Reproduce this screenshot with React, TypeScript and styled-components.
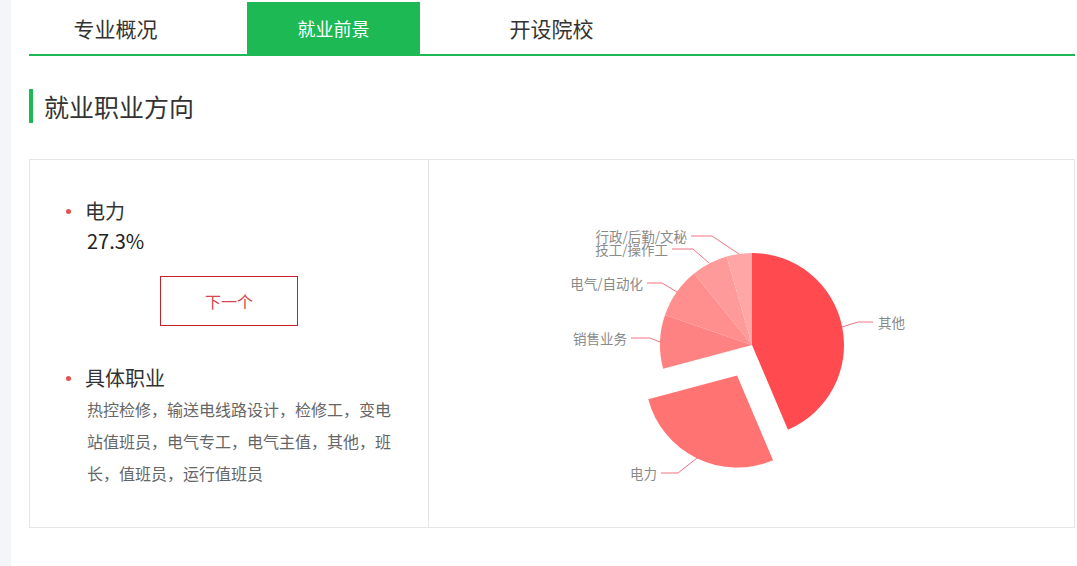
import React from "react";
import styled, { createGlobalStyle } from "styled-components";

const GREEN = "#1cb955";

const GlobalStyle = createGlobalStyle`
  html, body {
    margin: 0;
    padding: 0;
    background: #f4f5f9;
  }
  body {
    font-family: "Microsoft YaHei", "Noto Sans CJK SC", sans-serif;
    color: #333;
  }
  * { box-sizing: border-box; }
`;

const Page = styled.div`
  margin-left: 11px;
  min-height: 566px;
  background: #fff;
  padding: 2px 2px 0 18px;
`;

const TabBar = styled.div`
  display: flex;
  gap: 45px;
  border-bottom: 2px solid ${GREEN};
`;

const Tab = styled.div<{ $active?: boolean }>`
  width: 173px;
  height: 52px;
  display: flex;
  align-items: center;
  justify-content: center;
  font-size: ${(p) => (p.$active ? "18px" : "21px")};
  color: ${(p) => (p.$active ? "#fff" : "#333")};
  background: ${(p) => (p.$active ? GREEN : "transparent")};
  cursor: pointer;
`;

const SectionTitle = styled.h2`
  margin: 33px 0 0;
  height: 34px;
  line-height: 34px;
  border-left: 4px solid ${GREEN};
  padding-left: 11px;
  font-size: 25px;
  font-weight: normal;
  color: #333;
`;

const Card = styled.div`
  margin-top: 36px;
  height: 369px;
  border: 1px solid #e6e6e6;
  display: grid;
  grid-template-columns: 399px 1fr;
`;

const LeftPanel = styled.div`
  border-right: 1px solid #e6e6e6;
  padding-top: 36px;
`;

const Item = styled.div<{ $gap?: number }>`
  position: relative;
  padding-left: 55px;
  margin-top: ${(p) => p.$gap ?? 0}px;
  &::before {
    content: "";
    position: absolute;
    left: 36px;
    top: 13px;
    width: 5px;
    height: 5px;
    border-radius: 50%;
    background: #e3524f;
  }
`;

const ItemTitle = styled.div`
  font-size: 20px;
  line-height: 30px;
  color: #333;
`;

const ItemValue = styled.div`
  font-size: 20px;
  line-height: 30px;
  color: #222;
  margin-left: 2px;
`;

const NextButton = styled.button`
  display: block;
  margin: 20px auto 0;
  width: 138px;
  height: 50px;
  border: 1px solid #c8202a;
  background: #fff;
  color: #d3464e;
  font-family: inherit;
  font-size: 16px;
  cursor: pointer;
`;

const Desc = styled.div`
  margin-left: 2px;
  width: 310px;
  font-size: 16px;
  line-height: 32px;
  color: #666;
`;

const ChartPanel = styled.div`
  display: flex;
  align-items: center;
  justify-content: center;
`;

const ChartSvg = styled.svg`
  display: block;
  width: 644px;
  height: 367px;
`;

const LabelText = styled.text`
  font-size: 13.5px;
  fill: #8a8a8a;
  font-family: "Microsoft YaHei", "Noto Sans CJK SC", sans-serif;
`;

const CX = 322;
const CY = 185;
const R = 92;

type Slice = {
  name: string;
  start: number;
  end: number;
  color: string;
  offset?: number;
  line: [number, number][];
  anchor: "start" | "end";
  tx: number;
  ty: number;
};

const slices: Slice[] = [
  { name: "其他", start: 0, end: 157, color: "#ff4b4f", line: [[412, 167], [428, 162], [443, 162]], anchor: "start", tx: 448, ty: 162 },
  { name: "电力", start: 157, end: 255, color: "#ff7373", offset: 34, line: [[267, 298], [248, 313], [231, 313]], anchor: "end", tx: 227, ty: 313 },
  { name: "销售业务", start: 255, end: 289, color: "#ff8282", line: [[230, 182], [220, 178], [201, 178]], anchor: "end", tx: 197, ty: 178 },
  { name: "电气/自动化", start: 289, end: 321, color: "#ff8e8e", line: [[247, 132], [232, 123], [217, 123]], anchor: "end", tx: 213, ty: 123 },
  { name: "技工/操作工", start: 321, end: 344, color: "#ff9a9a", line: [[279, 103], [263, 89], [242, 89]], anchor: "end", tx: 238, ty: 89 },
  { name: "行政/后勤/文秘", start: 344, end: 360, color: "#ffa7a7", line: [[309, 94], [282, 76], [261, 76]], anchor: "end", tx: 257, ty: 76 },
];

const rad = (d: number) => (d * Math.PI) / 180;

function slicePath(s: Slice) {
  const mid = rad((s.start + s.end) / 2);
  const off = s.offset ?? 0;
  const ax = CX + off * Math.sin(mid);
  const ay = CY - off * Math.cos(mid);
  const x1 = ax + R * Math.sin(rad(s.start));
  const y1 = ay - R * Math.cos(rad(s.start));
  const x2 = ax + R * Math.sin(rad(s.end));
  const y2 = ay - R * Math.cos(rad(s.end));
  const large = s.end - s.start > 180 ? 1 : 0;
  return `M${ax.toFixed(2)},${ay.toFixed(2)} L${x1.toFixed(2)},${y1.toFixed(2)} A${R},${R} 0 ${large} 1 ${x2.toFixed(2)},${y2.toFixed(2)} Z`;
}

function PieChart() {
  return (
    <ChartSvg viewBox="0 0 644 367">
      {slices.map((s) => (
        <path key={s.name} d={slicePath(s)} fill={s.color} />
      ))}
      {slices.map((s) => (
        <g key={s.name + "-label"}>
          <polyline
            points={s.line.map((p) => p.join(",")).join(" ")}
            fill="none"
            stroke="#f07382"
            strokeWidth={1}
          />
          <LabelText x={s.tx} y={s.ty} textAnchor={s.anchor} dominantBaseline="central">
            {s.name}
          </LabelText>
        </g>
      ))}
    </ChartSvg>
  );
}

export default function App() {
  return (
    <>
      <GlobalStyle />
      <Page>
        <TabBar>
          <Tab>专业概况</Tab>
          <Tab $active>就业前景</Tab>
          <Tab>开设院校</Tab>
        </TabBar>
        <SectionTitle>就业职业方向</SectionTitle>
        <Card>
          <LeftPanel>
            <Item>
              <ItemTitle>电力</ItemTitle>
              <ItemValue>27.3%</ItemValue>
            </Item>
            <NextButton>下一个</NextButton>
            <Item $gap={37}>
              <ItemTitle>具体职业</ItemTitle>
              <Desc>热控检修，输送电线路设计，检修工，变电站值班员，电气专工，电气主值，其他，班长，值班员，运行值班员</Desc>
            </Item>
          </LeftPanel>
          <ChartPanel>
            <PieChart />
          </ChartPanel>
        </Card>
      </Page>
    </>
  );
}
